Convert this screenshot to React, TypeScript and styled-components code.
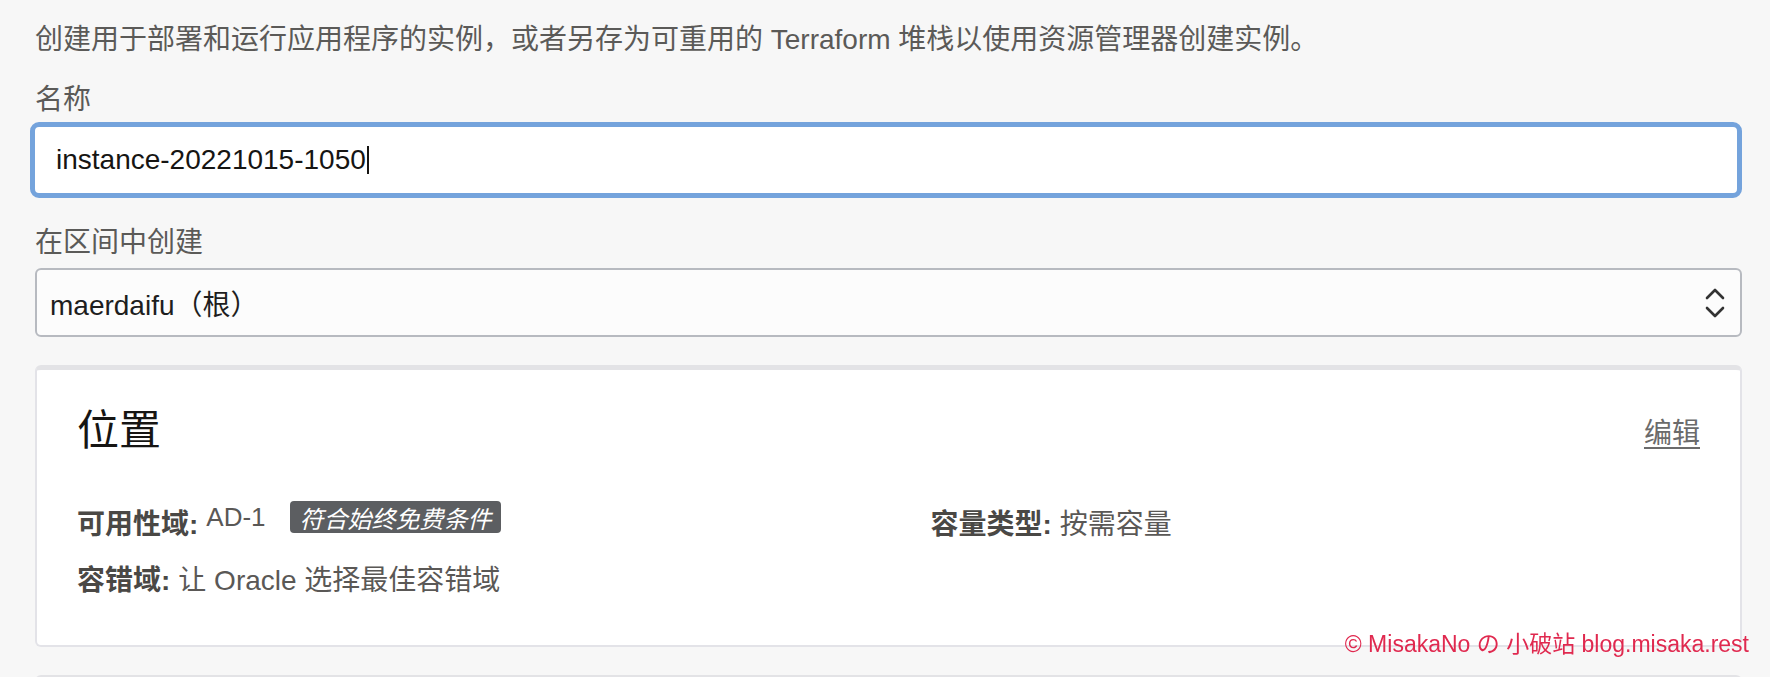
import React from "react";
import styled, { createGlobalStyle } from "styled-components";

const GlobalStyle = createGlobalStyle`
  html, body {
    margin: 0;
    padding: 0;
    background: #f7f7f7;
    height: 677px;
    overflow: hidden;
  }
  body {
    font-family: "Liberation Sans", Arial, "Noto Sans CJK SC", sans-serif;
    color: #5b5a58;
  }
  * { box-sizing: border-box; }
`;

const Page = styled.main`
  display: flex;
  flex-direction: column;
  padding: 22px 28px 0 35px;
`;

const Description = styled.p`
  margin: 0;
  font-size: 28px;
  line-height: 36px;
  color: #5b5a58;
  white-space: nowrap;
`;

const FieldLabel = styled.label<{ $gap: number }>`
  display: block;
  margin-top: ${(p) => p.$gap}px;
  font-size: 28px;
  line-height: 36px;
  color: #5b5a58;
`;

const TextBox = styled.div`
  margin-top: 4px;
  margin-left: -5px;
  height: 76px;
  border: 5px solid #74a3dc;
  border-radius: 9px;
  background: #ffffff;
  display: flex;
  align-items: center;
  padding-left: 21px;
  font-size: 28px;
  color: #161513;
`;

const Caret = styled.span`
  display: inline-block;
  width: 2px;
  height: 28px;
  margin-left: 1px;
  background: #161513;
`;

const SelectBox = styled.div`
  margin-top: 7px;
  height: 69px;
  border: 2px solid #b7bac0;
  border-radius: 6px;
  background: #fcfcfc;
  display: flex;
  align-items: center;
  justify-content: space-between;
  padding: 0 15px 0 13px;
  font-size: 28px;
  color: #1e1e1e;
`;

const Card = styled.section<{ $gap: number }>`
  margin-top: ${(p) => p.$gap}px;
  background: #ffffff;
  border: 2px solid #e3e3e8;
  border-top: 5px solid #e3e3e6;
  border-radius: 6px;
  padding: 36px 40px 49px 40px;
  min-height: 120px;
`;

const CardHead = styled.div`
  display: flex;
  align-items: center;
  justify-content: space-between;
  height: 50px;
`;

const Heading = styled.h2`
  margin: 0;
  font-size: 42px;
  line-height: 50px;
  font-weight: normal;
  color: #161513;
`;

const EditLink = styled.a`
  font-size: 28px;
  color: #6b6b6b;
  text-decoration: underline;
  text-underline-offset: 4px;
  text-decoration-thickness: 2px;
  cursor: pointer;
`;

const Grid = styled.div`
  margin-top: 48px;
  display: grid;
  grid-template-columns: 1fr 1fr;
  column-gap: 84px;
  row-gap: 20px;
`;

const Field = styled.div`
  display: flex;
  align-items: center;
  height: 36px;
  font-size: 28px;
  white-space: nowrap;
`;

const Key = styled.span`
  font-weight: bold;
  color: #4a4845;
  margin-right: 8px;
`;

const Value = styled.span`
  color: #5a5856;
`;

const ValueGroup = styled.span`
  display: flex;
  align-items: center;
  gap: 24px;
  margin-bottom: 10px;
  font-size: 26px;
  color: #5a5856;
`;

const Badge = styled.span`
  display: inline-flex;
  align-items: center;
  height: 32px;
  padding: 0 9px 0 10px;
  border-radius: 4px;
  background: #5c5e61;
  color: #ffffff;
  font-size: 24px;
  font-style: italic;
`;

const Watermark = styled.div`
  position: fixed;
  right: 21px;
  bottom: 21px;
  font-size: 23px;
  line-height: 23px;
  color: #e0294f;
  white-space: nowrap;
`;

const Chevrons = () => (
  <svg width="20" height="30" viewBox="0 0 20 30" fill="none" stroke="#333" strokeWidth="2.6" strokeLinecap="round" strokeLinejoin="round">
    <polyline points="2,10 10,2 18,10" />
    <polyline points="2,20 10,28 18,20" />
  </svg>
);

export default function App() {
  return (
    <>
      <GlobalStyle />
      <Page>
        <Description>
          创建用于部署和运行应用程序的实例，或者另存为可重用的 Terraform 堆栈以使用资源管理器创建实例。
        </Description>
        <FieldLabel $gap={24}>名称</FieldLabel>
        <TextBox>
          instance-20221015-1050
          <Caret />
        </TextBox>
        <FieldLabel $gap={27}>在区间中创建</FieldLabel>
        <SelectBox>
          <span>maerdaifu（根）</span>
          <Chevrons />
        </SelectBox>
        <Card $gap={28}>
          <CardHead>
            <Heading>位置</Heading>
            <EditLink>编辑</EditLink>
          </CardHead>
          <Grid>
            <Field>
              <Key>可用性域:</Key>
              <ValueGroup>
                <span>AD-1</span>
                <Badge>符合始终免费条件</Badge>
              </ValueGroup>
            </Field>
            <Field>
              <Key>容量类型:</Key>
              <Value>按需容量</Value>
            </Field>
            <Field>
              <Key>容错域:</Key>
              <Value>让 Oracle 选择最佳容错域</Value>
            </Field>
          </Grid>
        </Card>
        <Card $gap={28} />
      </Page>
      <Watermark>© MisakaNo の 小破站 blog.misaka.rest</Watermark>
    </>
  );
}
